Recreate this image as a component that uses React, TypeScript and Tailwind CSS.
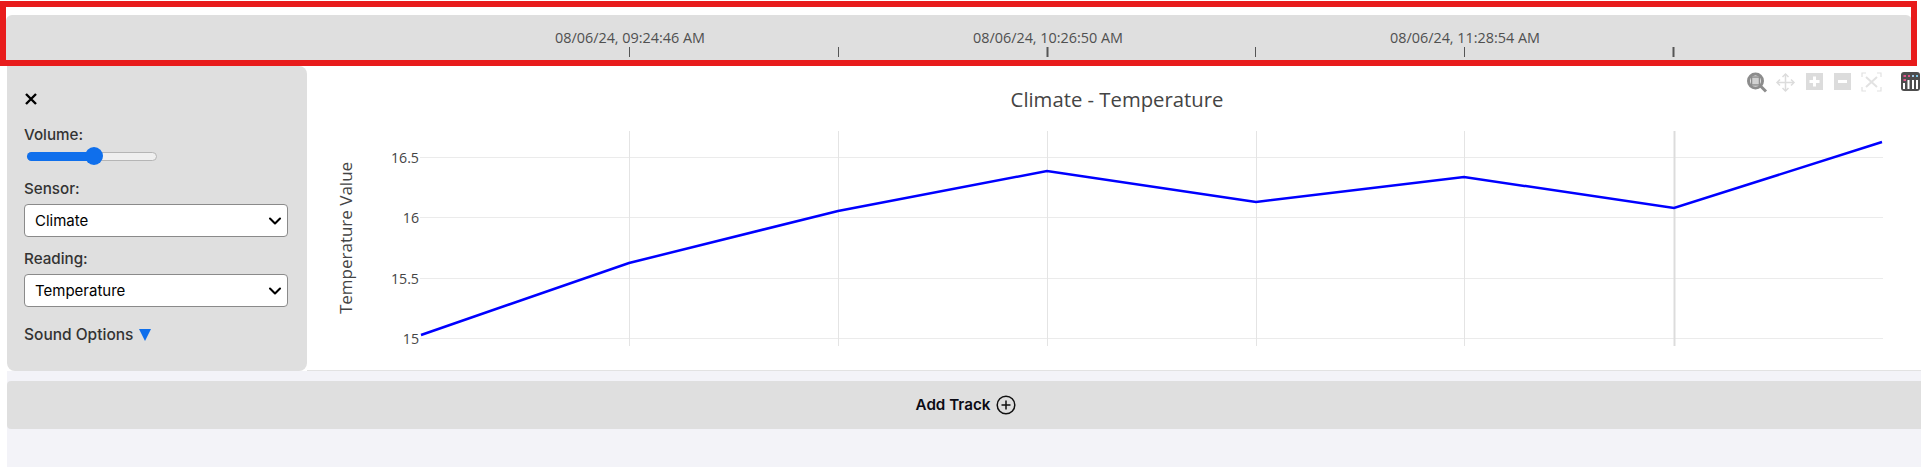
import { ChevronDown } from "lucide-react";

const font = "font-['Open_Sans',sans-serif]";

const ticks = [
  { x: 629, label: "08/06/24, 09:24:46 AM", w: 1 },
  { x: 838, w: 1 },
  { x: 1047, label: "08/06/24, 10:26:50 AM", w: 2 },
  { x: 1255, w: 1 },
  { x: 1464, label: "08/06/24, 11:28:54 AM", w: 1 },
  { x: 1673, w: 2 },
];

const gridX = [629, 838, 1047, 1256, 1464, 1674];

const yTicks = [
  { y: 157, label: "16.5" },
  { y: 217, label: "16" },
  { y: 278, label: "15.5" },
  { y: 338, label: "15" },
];

const points = "421,335 629,263 838,211 1047,171 1256,202 1464,177 1674,208 1882,142";

function Timeline() {
  return (
    <svg width="1906" height="51" className="block">
      {ticks.map((t) => (
        <g key={t.x}>
          {t.label && (
            <text x={t.x - 5} y="28" textAnchor="middle" fontSize="14.4" fill="#505050" fontFamily="Open Sans, sans-serif">
              {t.label}
            </text>
          )}
          <line x1={t.x - 6 + 0.5} x2={t.x - 6 + 0.5} y1="32" y2="42" stroke="#555" strokeWidth={t.w} />
        </g>
      ))}
    </svg>
  );
}

function Field({ label, value }: { label: string; value: string }) {
  return (
    <div>
      <div className="text-[15.2px] leading-[20px] font-medium text-[#333] mb-[5px]">{label}</div>
      <div className="flex items-center justify-between h-[33px] w-[264px] bg-white border border-[#8a8a8a] rounded-[4px] pl-[10px] pr-[2px] text-[15px] text-black">
        <span className="pt-px">{value}</span>
        <ChevronDown size={20} strokeWidth={2.5} />
      </div>
    </div>
  );
}

function SidePanel() {
  return (
    <div className="w-[300px] h-[305px] shrink-0 bg-[#dfdfdf] rounded-b-lg rounded-tr-lg pl-[17px] pt-[26px] font-['Inter',sans-serif]">
      <svg width="14" height="14" viewBox="0 0 14 14" className="block">
        <path d="M2 2 L12 12 M12 2 L2 12" stroke="#000" strokeWidth="2.4" />
      </svg>
      <div className="text-[15.2px] leading-[20px] font-medium text-[#333] mt-[19px]">Volume:</div>
      <div className="relative mt-[7px] h-[9px] w-[130px] ml-[3px] bg-[#efefef] border border-[#b5b5b5] rounded-full">
        <div className="h-[9px] w-[66px] -mt-px -ml-px bg-[#0f6fec] rounded-full" />
        <div className="absolute left-[57px] top-[-6px] w-[18px] h-[18px] rounded-full bg-[#0f6fec]" />
      </div>
      <div className="flex flex-col gap-[12px] mt-[18px]">
        <Field label="Sensor:" value="Climate" />
        <Field label="Reading:" value="Temperature" />
      </div>
      <div className="flex items-center gap-[6px] mt-[18px] text-[15.5px] leading-[20px] font-medium text-[#333]">
        Sound Options
        <svg width="12" height="12" viewBox="0 0 12 12">
          <path d="M0 0 H12 L6 12 Z" fill="#0f6fec" />
        </svg>
      </div>
    </div>
  );
}

function ModeBar() {
  return (
    <svg width="181" height="32" viewBox="0 0 181 32" className="absolute right-0 top-0">
      <g fill="none" stroke="#8c8c8c">
        <circle cx="15.5" cy="15" r="7" strokeWidth="3" />
        <rect x="11.500" y="11" width="8" height="8" fill="#8c8c8c" fillOpacity="0.4" strokeWidth="1.5" />
        <path d="M21 20.5 L26 25.500" strokeWidth="3" />
      </g>
      <g fill="none" stroke="#dcdcdc" strokeWidth="1.5">
        <path d="M45.5 8 V25 M37 16.5 H54" />
        <path d="M42.5 11 L45.5 8 L48.5 11 M42.5 22 L45.5 25 L48.5 22 M40 13.5 L37 16.5 L40 19.5 M51 13.5 L54 16.5 L51 19.5" />
      </g>
      <rect x="66" y="7" width="17" height="17" fill="#dcdcdc" />
      <path d="M74.5 10.5 V20.5 M69.5 15.5 H79.5" stroke="#fff" strokeWidth="3" />
      <rect x="94" y="7" width="17" height="17" fill="#dcdcdc" />
      <path d="M98 15.5 H107" stroke="#fff" strokeWidth="3" />
      <g fill="none" stroke="#e2e2e2" strokeWidth="1.2">
        <path d="M122 11 V7 H126 M137 7 H141 V11 M141 21 V25 H137 M126 25 H122 V21" />
        <path d="M126 11 L137 21 M137 11 L126 21" strokeWidth="2" />
      </g>
      <rect x="161" y="6" width="19" height="19" rx="3" fill="#4d4d4d" />
      <g stroke="#fff" strokeWidth="2">
        <path d="M164 17 V23 M168.5 14 V23 M173 14 V23 M177 14 V23" />
      </g>
      <g strokeWidth="2">
        <path d="M163.500 10 H166" stroke="#e0558c" />
        <path d="M163.500 14 H166" stroke="#e0558c" />
        <path d="M168 10 H170" stroke="#e0558c" />
        <path d="M172 10 H174" stroke="#a0c8e8" />
        <path d="M176 10 H178" stroke="#7ec8e8" />
      </g>
    </svg>
  );
}

function Chart() {
  return (
    <div className="relative flex-1 h-[305px] bg-white border-b border-[#e2e2e2]">
      <ModeBar />
      {/* plot coordinates are page pixels, shifted by the chart's own origin */}
      <svg width="1614" height="304" viewBox="307 66 1614 304" className="block" fontFamily="Open Sans, sans-serif">
        <text x="1117" y="107" textAnchor="middle" fontSize="20.3" fill="#444">
          Climate - Temperature
        </text>
        <text transform="translate(352 238) rotate(-90)" textAnchor="middle" fontSize="17" fill="#444">
          Temperature Value
        </text>
        {yTicks.map((t) => (
          <g key={t.y}>
            <line x1="420" x2="1883" y1={t.y + 0.5} y2={t.y + 0.5} stroke="#ebebeb" />
            <text x="419" y={t.y + 6} textAnchor="end" fontSize="14.2" fill="#444">
              {t.label}
            </text>
          </g>
        ))}
        {gridX.map((x) => (
          <line key={x} x1={x + 0.5} x2={x + 0.5} y1="131" y2="346" stroke={x === 1674 ? "#dcdcdc" : "#e4e4e4"} strokeWidth={x === 1674 ? 2 : 1} />
        ))}
        <polyline points={points} fill="none" stroke="#0000ff" strokeWidth="2.5" />
      </svg>
    </div>
  );
}

export default function App() {
  return (
    <div className={`relative h-[467px] w-[1921px] overflow-hidden bg-white ${font}`}>
      {/* annotation box drawn over the screenshot */}
      <div className="absolute left-0 top-px h-[65px] w-[1917px] border-[6px] border-[#e81c1c]" />

      <div className="pt-[15px] pl-[6px]">
        <div className="h-[51px] w-[1906px] bg-[#dfdfdf] rounded-t-md">
          <Timeline />
        </div>
      </div>

      <div className="flex pl-[7px]">
        <SidePanel />
        <Chart />
      </div>

      <div className="ml-[7px] h-[96px] bg-[#f3f3f8] pt-[10px]">
        <div className="flex h-[48px] items-center justify-center gap-[6px] pl-[4px] rounded-l-[4px] bg-[#dfdfdf] text-[15.2px] font-semibold text-[#0b0b14] font-['Inter',sans-serif]">
          Add Track
          <svg width="20" height="20" viewBox="0 0 20 20" fill="none" stroke="#111" strokeWidth="1.5">
            <circle cx="10" cy="10" r="8.800" />
            <path d="M10 5.5 V14.5 M5.500 10 H14.500" />
          </svg>
        </div>
      </div>
    </div>
  );
}
